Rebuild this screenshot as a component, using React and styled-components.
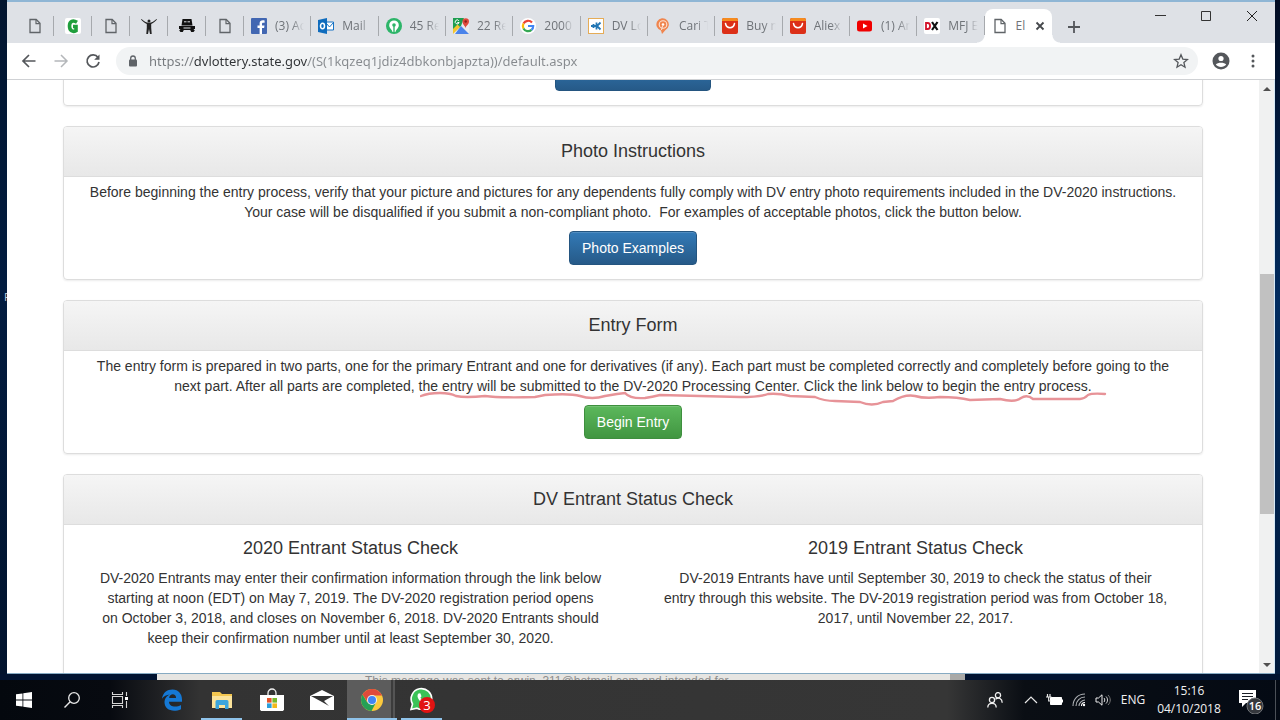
import React from "react";
import styled, { createGlobalStyle, css } from "styled-components";

const ui = `"Open Sans", "Noto Sans", sans-serif`;
const web = `"Liberation Sans", Arial, sans-serif`;

const GlobalStyle = createGlobalStyle`
  *, *::before, *::after { box-sizing: border-box; }
  body { margin: 0; background: #02142f; }
  button, input { font: inherit; margin: 0; }
  h2, h3, p { margin: 0; font-weight: 400; }
  svg { display: block; }
`;

/* ---------- Desktop ---------- */
const Desktop = styled.div`
  display: flex;
  flex-direction: column;
  height: 100vh;
  overflow: hidden;
  background: linear-gradient(180deg, #02152f, #021c40 40%, #01122b);
`;
const Stage = styled.div`
  flex: 1;
  min-height: 0;
  display: flex;
`;
const LeftEdge = styled.div`
  flex: none;
  width: 7px;
  display: flex;
  align-items: center;
  padding: 0 0 80px 4px;
  overflow: hidden;
  color: #c9d3df;
  font: 11px/16px ${ui};
`;
const RightEdge = styled.div`
  flex: none;
  width: 5px;
  background: linear-gradient(180deg, #020c22, #012c60 45%, #011a3c);
`;
const Behind = styled.div`
  flex: none;
  height: 6px;
  display: flex;
  overflow: hidden;
`;
const BehindGap = styled.div`
  flex: none;
  width: ${(p) => p.$w}px;
  background: #011330;
`;
const BehindMail = styled.div`
  flex: 1;
  background: #e6e5e2;
  border-right: 15px solid #a9a9a7;
  padding-left: 208px;
  color: #8d8d8d;
  font: 12px/14px ${web};
  white-space: nowrap;
`;

/* ---------- Browser window ---------- */
const Window = styled.main`
  flex: 1;
  min-width: 0;
  display: flex;
  flex-direction: column;
  background: #fff;
  border-bottom: 1px solid #86aac2;
`;
const TabStrip = styled.header`
  flex: none;
  height: 43px;
  display: flex;
  background: #dee1e6;
  border-top: 2px solid #8fb6d5;
`;
const Tabs = styled.nav`
  flex: 1;
  min-width: 0;
  display: flex;
  align-items: flex-end;
  padding-left: 9px;
`;
const Tab = styled.button`
  flex: ${(p) => (p.$pinned ? "0 0 38px" : "1 1 0")};
  min-width: 0;
  height: 34px;
  display: flex;
  align-items: center;
  justify-content: ${(p) => (p.$pinned ? "center" : "flex-start")};
  gap: 8px;
  padding: ${(p) => (p.$pinned ? "0" : "0 7px")};
  border: 0;
  background: linear-gradient(#a6a9ad, #a6a9ad) right center / 1px 20px no-repeat;
  color: #6f7378;
  font: 12px/16px ${ui};
  ${(p) =>
    p.$active &&
    css`
      position: relative;
      background: #fff;
      border-radius: 8px 8px 0 0;
      &::before,
      &::after {
        content: "";
        position: absolute;
        bottom: 0;
        width: 8px;
        height: 8px;
      }
      &::before {
        right: 100%;
        background: radial-gradient(circle at 0 0, #dee1e6 7px, #fff 8px);
      }
      &::after {
        left: 100%;
        background: radial-gradient(circle at 100% 0, #dee1e6 7px, #fff 8px);
      }
    `}
`;
const Favicon = styled.span`
  flex: none;
`;
const TabTitle = styled.span`
  flex: 1;
  min-width: 0;
  overflow: hidden;
  text-align: left;
  white-space: nowrap;
  mask-image: linear-gradient(90deg, #000 calc(100% - 12px), transparent);
`;
const ActiveTitle = styled(TabTitle)`
  mask-image: none;
`;
const NewTab = styled.button`
  flex: none;
  width: 85px;
  padding: 8px 0 0 15px;
  border: 0;
  background: none;
`;
const WindowButton = styled.button`
  flex: none;
  width: 46px;
  height: 28px;
  display: grid;
  place-items: center;
  padding: 0;
  border: 0;
  background: none;
`;
const Toolbar = styled.div`
  flex: none;
  height: 37px;
  display: flex;
  align-items: center;
  padding: 0 6px;
  border-bottom: 1px solid #cfd1d4;
`;
const ToolButton = styled.button`
  flex: none;
  width: 32px;
  height: 28px;
  display: grid;
  place-items: center;
  padding: 0;
  border: 0;
  background: none;
`;
const Omnibox = styled.label`
  flex: 1;
  min-width: 0;
  height: 28px;
  display: flex;
  align-items: center;
  gap: 11px;
  margin: 0 7px;
  padding: 0 1px 0 12px;
  border-radius: 14px;
  background: #f1f3f4;
`;
const Address = styled.input`
  flex: 1;
  min-width: 0;
  padding: 0;
  border: 0;
  outline: 0;
  font: 13px/20px "Noto Sans", ${ui};
  color: transparent;
  background: linear-gradient(90deg, #75797d 45px, #303336 45px, #303336 159px, #868a8e 159px);
  background-clip: text;
`;

/* ---------- Web page ---------- */
const Viewport = styled.div`
  flex: 1;
  min-height: 0;
  display: flex;
`;
const Page = styled.div`
  flex: 1;
  min-width: 0;
  overflow: hidden;
  display: flex;
  flex-direction: column;
  gap: 20px;
  padding: 0 56px;
  color: #333;
  font: 14px/20px ${web};
`;
const Panel = styled.section`
  flex: none;
  border: 1px solid #ddd;
  border-radius: 4px;
  box-shadow: 0 1px 2px rgba(0, 0, 0, 0.08);
  text-align: center;
`;
const ClippedPanel = styled(Panel)`
  margin-top: -29px;
`;
const PanelTitle = styled.h2`
  height: 50px;
  border-bottom: 1px solid #ddd;
  border-radius: 3px 3px 0 0;
  background: linear-gradient(#f5f5f5, #e8e8e8);
  font-size: 18px;
  line-height: 48px;
`;
const PanelBody = styled.div`
  display: flex;
  flex-direction: column;
  align-items: center;
  gap: 9px;
  padding: 5px 14px 14px;
`;
const Copy = styled.p`
  position: relative;
  align-self: stretch;
`;
const Action = styled.button`
  height: 34px;
  min-width: ${(p) => p.$minWidth || 0}px;
  padding: 0 12px;
  border: 1px solid ${(p) => (p.$green ? "#3e8f3e" : "#245580")};
  border-radius: 4px;
  background: ${(p) =>
    p.$green ? "linear-gradient(#5cb85c, #419641)" : "linear-gradient(#337ab7, #265a88)"};
  box-shadow: inset 0 1px 0 rgba(255, 255, 255, 0.15);
  color: #fff;
`;
const Columns = styled.div`
  display: grid;
  grid-template-columns: 1fr 1fr;
  padding: 13px 4px 60px;
`;
const ColumnTitle = styled.h3`
  margin-bottom: 10px;
  font-size: 18px;
  line-height: 20px;
`;
const Marker = styled.svg`
  position: absolute;
  top: 34px;
  left: 50%;
  margin-left: -213px;
`;
const Scrollbar = styled.div`
  flex: none;
  width: 16px;
  display: flex;
  flex-direction: column;
  background: #f0f1f1;
  border-right: 1px solid #d5e9f7;
`;
const ScrollArrow = styled.button`
  flex: none;
  height: 17px;
  display: grid;
  place-items: center;
  padding: 0;
  border: 0;
  background: none;
`;
const ScrollSpace = styled.div`
  flex: ${(p) => p.$share};
`;
const ScrollThumb = styled.div`
  flex: 240;
  margin-left: 1px;
  background: #c1c1c1;
`;

/* ---------- Taskbar ---------- */
const Taskbar = styled.footer`
  flex: none;
  height: 40px;
  display: flex;
  background: linear-gradient(90deg, #04080e 0, #070a10 110px, #333 200px, #363636 74%, #0a0e14 80%, #040a14);
  color: #f2f2f2;
  font: 12px/18px ${ui};
`;
const TaskButton = styled.button`
  flex: none;
  width: ${(p) => (p.$app ? 50 : 48)}px;
  display: grid;
  place-items: center;
  padding: 0;
  border: 0;
  background: ${(p) =>
    p.$active ? "linear-gradient(90deg, #5c5c5c 44px, #3c3c3c 44px, #3c3c3c 46px, #555 46px)" : "none"};
  background-size: 48px 100%;
  background-repeat: no-repeat;
  ${(p) => p.$open && css`box-shadow: inset 0 -2px 0 #8fc3ea;`}
  ${(p) =>
    p.$line &&
    css`
      background: linear-gradient(#8fc3ea, #8fc3ea) 4px 100% / 41px 2px no-repeat;
    `}
`;
const Apps = styled.nav`
  flex: 1;
  min-width: 0;
  display: flex;
  padding-left: 3px;
`;
const Tray = styled.div`
  flex: none;
  display: flex;
  align-items: center;
`;
const TrayButton = styled.button`
  flex: none;
  width: ${(p) => p.$w || 24}px;
  height: 40px;
  display: grid;
  place-items: center;
  padding: 0;
  border: 0;
  background: none;
  color: inherit;
  white-space: nowrap;
`;
const Peek = styled.div`
  flex: none;
  width: 5px;
  height: 40px;
  border-left: 1px solid #4b5057;
`;

/* ---------- Favicons ---------- */
const Svg = ({ w = 16, h = w, box, children, ...rest }) => (
  <svg width={w} height={h} viewBox={box || `0 0 ${w} ${h}`} fill="none" aria-hidden="true" {...rest}>
    {children}
  </svg>
);
const DocIcon = () => (
  <Svg>
    <path d="M3 1.500h6.200L13 5.300v9.200H3z" stroke="#606468" strokeWidth="1.300" />
    <path d="M9 1.800v3.900h3.800" stroke="#606468" strokeWidth="1.200" />
  </Svg>
);
const GreenG = () => (
  <Svg>
    <rect width="16" height="16" rx="2" fill="#fff" />
    <path d="M12 4.300C8 1.800 4.500 3 4.500 8s3.500 6.300 6.500 4.600V8.500H8" stroke="#1f9e3c" strokeWidth="3.600" />
  </Svg>
);
const PersonArms = () => (
  <Svg>
    <circle cx="8" cy="3" r="1.500" fill="#222" />
    <path d="M.5 1C3 3.300 5 4.600 8 4.800c3-.2 5-1.500 7.500-3.800l.5.600c-2 2.400-4 3.700-5.800 4.500v3.600l.5 6.300H9L8 11l-1 5H5.300l.5-6.300V6.100C4 5.300 2 4 0 1.600z" fill="#222" />
  </Svg>
);
const JeepIcon = () => (
  <Svg>
    <path d="M3.500 1h9l1 6.500h-11z" fill="#111" />
    <path d="M5 3.800h2.500M8.500 3.800H11" stroke="#dee1e6" />
    <path d="M0 8h16v3h-1.500l1.300 1.500-1.300 1.500h-2.300l-1-2H4.800l-1 2H1.500L.2 12.500 1.500 11H0z" fill="#111" />
    <path d="M4.500 10h7" stroke="#dee1e6" />
  </Svg>
);
const FacebookIcon = () => (
  <Svg>
    <rect width="16" height="16" rx="1" fill="#4267b2" />
    <path d="M11 16V10h2.100l.4-2.500H11V6c0-.8.4-1.300 1.400-1.300h1.200V2.500c-3.200-.6-5 .4-5 3.100v1.900H6.500V10h2.100v6z" fill="#fff" />
  </Svg>
);
const OutlookIcon = () => (
  <Svg>
    <path d="M8 4h7.500v8H8z" fill="#fff" stroke="#1673c4" />
    <path d="m8 5 3.500 4L15.500 4.500" stroke="#1673c4" />
    <path d="M0 2l9-2v16l-9-2z" fill="#0f6cbd" />
    <ellipse cx="4.500" cy="8" rx="2" ry="2.700" stroke="#fff" strokeWidth="1.500" />
  </Svg>
);
const GreenPin = () => (
  <Svg>
    <circle cx="8" cy="8" r="8" fill="#2db569" />
    <path d="M6.500 14C6.500 11.500 3.200 10.500 3.200 7.200a4.800 4.800 0 0 1 9.600 0c0 3.300-3.300 4.300-3.300 6.800z" fill="#fff" />
    <circle cx="8" cy="7" r="1.800" fill="#2db569" />
    <path d="M8 8v7" stroke="#2db569" strokeWidth="1.400" />
  </Svg>
);
const MapsIcon = () => (
  <Svg>
    <rect width="16" height="16" rx="1" fill="#e8eaed" />
    <path d="M0 0h11L8 8l-8 7z" fill="#1e9e50" />
    <path d="m0 11 4.500-4.500L7 9l-7 7z" fill="#f5c52c" />
    <path d="m8 8 8 8H2z" fill="#4a83ea" />
    <path d="M12.500 10C12 7.500 9.500 6.500 9.500 3.500a3.200 3.200 0 0 1 6.500 0c0 3-3 4-3.500 6.500z" fill="#df4a3c" />
    <circle cx="12.700" cy="3.500" r="1.200" fill="#8b1f19" />
    <path d="M5.800 2.700a2 2 0 1 0 .3 1.800H4.300" stroke="#fff" />
  </Svg>
);
const GoogleIcon = () => (
  <Svg>
    <circle cx="8" cy="8" r="8" fill="#fff" />
    <path d="M12 4.500A5.200 5.200 0 0 0 3.500 5.600" stroke="#ea4335" strokeWidth="2.200" />
    <path d="M3.500 5.600a5.200 5.200 0 0 0 0 4.800" stroke="#fbbc05" strokeWidth="2.200" />
    <path d="M3.500 10.400a5.200 5.200 0 0 0 8 1.500" stroke="#34a853" strokeWidth="2.200" />
    <path d="M11.500 11.900A5 5 0 0 0 13.200 8H8" stroke="#4285f4" strokeWidth="2.200" />
  </Svg>
);
const KIcon = () => (
  <Svg>
    <rect x=".5" y=".5" width="15" height="15" fill="#fff" stroke="#e5ac57" />
    <path d="M3 8h5M5.500 6v4M8.500 4.500v7M12.500 4.500 9 8l3.500 3.500" stroke="#2377b4" strokeWidth="1.800" />
  </Svg>
);
const OrangePin = () => (
  <Svg>
    <path d="M7 16 6 12.500A6.200 6.200 0 1 1 10.500 12z" fill="#f0854e" />
    <circle cx="8" cy="6.500" r="3.800" stroke="#fbe3d6" strokeWidth="1.100" />
    <circle cx="8" cy="6.500" r="1.300" fill="#fff" />
    <path d="m7.500 8-1 4" stroke="#fbe3d6" />
  </Svg>
);
const AliIcon = () => (
  <Svg>
    <rect width="16" height="16" rx="2" fill="#dc3018" />
    <path d="M0 3V2a2 2 0 0 1 2-2h12a2 2 0 0 1 2 2v1z" fill="#f58b1f" />
    <path d="M3.500 5.500c1 5.500 8 5.500 9 0" stroke="#fff" strokeWidth="1.500" strokeLinecap="round" />
  </Svg>
);
const YoutubeIcon = () => (
  <Svg>
    <rect x="0" y="2.500" width="15" height="11" rx="2.500" fill="#f00000" />
    <path d="m6 5.500 4.500 2.500L6 10.500z" fill="#fff" />
  </Svg>
);
const DxIcon = () => (
  <Svg>
    <rect width="16" height="16" rx="2" fill="#fff" />
    <path d="M2 5h1.800c3 0 3 6 0 6H2z" stroke="#d3142c" strokeWidth="1.800" />
    <path d="m8 4 5.500 8M13.500 4 8 12" stroke="#111" strokeWidth="2.200" />
  </Svg>
);

/* ---------- Data ---------- */
const pinnedTabs = [DocIcon, GreenG, DocIcon, PersonArms, JeepIcon, DocIcon];
const openTabs = [
  [FacebookIcon, "(3) Ads"],
  [OutlookIcon, "Mail"],
  [GreenPin, "45 Re"],
  [MapsIcon, "22 Re"],
  [GoogleIcon, "2000"],
  [KIcon, "DV Lo"],
  [OrangePin, "Cari T"],
  [AliIcon, "Buy n"],
  [AliIcon, "Aliex"],
  [YoutubeIcon, "(1) An"],
  [DxIcon, "MFJ E"],
];

const InfoPanel = ({ title, children }) => (
  <Panel>
    <PanelTitle>{title}</PanelTitle>
    {children}
  </Panel>
);

const Browser = () => (
  <Window>
    <TabStrip>
      <Tabs aria-label="Tabs">
        {pinnedTabs.map((Icon, i) => (
          <Tab key={i} $pinned aria-label="Pinned tab">
            <Icon />
          </Tab>
        ))}
        {openTabs.map(([Icon, title]) => (
          <Tab key={title}>
            <Favicon><Icon /></Favicon>
            <TabTitle>{title}</TabTitle>
          </Tab>
        ))}
        <Tab $active>
          <Favicon><DocIcon /></Favicon>
          <ActiveTitle>El</ActiveTitle>
          <Svg w={10}><path d="m1.500 1.500 7 7m0-7-7 7" stroke="#45484c" strokeWidth="1.800" /></Svg>
        </Tab>
      </Tabs>
      <NewTab aria-label="New tab">
        <Svg w={14}><path d="M7 1v12M1 7h12" stroke="#54575b" strokeWidth="1.800" /></Svg>
      </NewTab>
      <WindowButton aria-label="Minimize">
        <Svg w={12}><path d="M1 5.500h11" stroke="#333" /></Svg>
      </WindowButton>
      <WindowButton aria-label="Maximize">
        <Svg w={12}><path d="M1.500 1.500h9v9h-9z" stroke="#333" /></Svg>
      </WindowButton>
      <WindowButton aria-label="Close">
        <Svg w={12}><path d="m1 1 10 10m0-10L1 11" stroke="#222" /></Svg>
      </WindowButton>
    </TabStrip>
    <Toolbar>
      <ToolButton aria-label="Back">
        <Svg w={16}><path d="M14.500 8H2.500M8 2 2 8l6 6" stroke="#54575b" strokeWidth="1.700" /></Svg>
      </ToolButton>
      <ToolButton aria-label="Forward">
        <Svg w={16}><path d="M1.500 8h12M8 2l6 6-6 6" stroke="#b4b7ba" strokeWidth="1.500" /></Svg>
      </ToolButton>
      <ToolButton aria-label="Reload">
        <Svg w={16}>
          <path d="M13 4.500A6 6 0 1 0 14 9" stroke="#54575b" strokeWidth="1.700" />
          <path d="M14.500 1.500v5.300H9.200z" fill="#54575b" />
        </Svg>
      </ToolButton>
      <Omnibox>
        <Svg w={10} h={12}>
          <rect x="1" y="4.500" width="8" height="7" rx="1" fill="#5f6368" />
          <path d="M2.700 5V3.300a2.300 2.300 0 0 1 4.600 0V5" stroke="#5f6368" strokeWidth="1.300" />
        </Svg>
        <Address
          aria-label="Address"
          spellCheck={false}
          defaultValue="https://dvlottery.state.gov/(S(1kqzeq1jdiz4dbkonbjapzta))/default.aspx"
        />
        <ToolButton aria-label="Bookmark">
          <Svg w={16}>
            <path d="m8 1.800 1.800 4.300 4.700.4-3.600 3.100 1.100 4.600L8 11.700l-4 2.500 1.100-4.600-3.600-3.100 4.700-.4z" stroke="#54575b" strokeWidth="1.300" />
          </Svg>
        </ToolButton>
      </Omnibox>
      <ToolButton aria-label="Profile">
        <Svg w={18}>
          <circle cx="9" cy="9" r="8.500" fill="#54575b" />
          <circle cx="9" cy="6.500" r="2.600" fill="#fff" />
          <path d="M3.800 12.600c1.800-2.600 8.600-2.600 10.400 0-2.300 3.200-8.100 3.200-10.400 0z" fill="#fff" />
        </Svg>
      </ToolButton>
      <ToolButton aria-label="Menu">
        <Svg w={4} h={14}>
          <circle cx="2" cy="2" r="1.500" fill="#54575b" />
          <circle cx="2" cy="7" r="1.500" fill="#54575b" />
          <circle cx="2" cy="12" r="1.500" fill="#54575b" />
        </Svg>
      </ToolButton>
    </Toolbar>
    <Viewport>
      <Page>
        <ClippedPanel>
          <PanelBody>
            <Action $minWidth={156} aria-label="Instructions" />
          </PanelBody>
        </ClippedPanel>
        <InfoPanel title="Photo Instructions">
          <PanelBody>
            <Copy>
              Before beginning the entry process, verify that your picture and pictures for any dependents fully comply with DV entry photo requirements included in the DV-2020 instructions.
              <br />
              Your case will be disqualified if you submit a non-compliant photo.&nbsp; For examples of acceptable photos, click the button below.
            </Copy>
            <Action>Photo Examples</Action>
          </PanelBody>
        </InfoPanel>
        <InfoPanel title="Entry Form">
          <PanelBody>
            <Copy>
              The entry form is prepared in two parts, one for the primary Entrant and one for derivatives (if any). Each part must be completed correctly and completely before going to the
              <br />
              next part. After all parts are completed, the entry will be submitted to the DV-2020 Processing Center. Click the link below to begin the entry process.
              <Marker width="688" height="18" viewBox="420 390 688 18" fill="none" aria-hidden="true">
                <path
                  d="M421 396Q428 393 440 393 450 393 456 396 465 398 485 396 500 398 535 397L545 395Q570 393 580 396 592 400 605 396L617 394 625 393Q630 399 645 398 652 397 660 395L740 397Q760 397 768 394 778 393 790 396L815 397Q824 401 835 401L860 402Q872 407 883 402L893 401Q905 394 915 396 925 399 940 397 958 397 970 400L1000 399Q1015 403 1021 398 1027 394 1033 399L1080 399Q1084 399 1088 395 1092 393 1105 394"
                  stroke="#e79398"
                  strokeWidth="2.400"
                  strokeLinecap="round"
                />
              </Marker>
            </Copy>
            <Action $green>Begin Entry</Action>
          </PanelBody>
        </InfoPanel>
        <InfoPanel title="DV Entrant Status Check">
          <Columns>
            <div>
              <ColumnTitle>2020 Entrant Status Check</ColumnTitle>
              <p>
                DV-2020 Entrants may enter their confirmation information through the link below
                <br />
                starting at noon (EDT) on May 7, 2019. The DV-2020 registration period opens
                <br />
                on October 3, 2018, and closes on November 6, 2018. DV-2020 Entrants should
                <br />
                keep their confirmation number until at least September 30, 2020.
              </p>
            </div>
            <div>
              <ColumnTitle>2019 Entrant Status Check</ColumnTitle>
              <p>
                DV-2019 Entrants have until September 30, 2019 to check the status of their
                <br />
                entry through this website. The DV-2019 registration period was from October 18,
                <br />
                2017, until November 22, 2017.
              </p>
            </div>
          </Columns>
        </InfoPanel>
      </Page>
      <Scrollbar>
        <ScrollArrow aria-label="Scroll up">
          <Svg w={8} h={4}><path d="m0 4 4-4 4 4z" fill="#505050" /></Svg>
        </ScrollArrow>
        <ScrollSpace $share={177} />
        <ScrollThumb />
        <ScrollSpace $share={142} />
        <ScrollArrow aria-label="Scroll down">
          <Svg w={8} h={4}><path d="m0 0 4 4 4-4z" fill="#505050" /></Svg>
        </ScrollArrow>
      </Scrollbar>
    </Viewport>
  </Window>
);

const SystemBar = () => (
  <Taskbar>
    <TaskButton aria-label="Start">
      <Svg w={16}><path d="M0 2.300 6.500 1.400v6.200H0zM7.300 1.300 16 0v7.600H7.300zM0 8.400h6.500v6.200L0 13.700zM7.300 8.400H16V16l-8.700-1.300z" fill="#fff" /></Svg>
    </TaskButton>
    <TaskButton aria-label="Search">
      <Svg w={16}>
        <circle cx="10" cy="6" r="5.300" stroke="#e8e8e8" strokeWidth="1.300" />
        <path d="m6.200 9.800-5.700 5.700" stroke="#e8e8e8" strokeWidth="1.400" />
      </Svg>
    </TaskButton>
    <TaskButton aria-label="Task view">
      <Svg w={18} h={16}>
        <path d="M1.500 4.500h10v7h-10zM1.500 0v2.500h10V0M1.500 16v-2.500h10V16M15.500 0v4M15.500 9v7" stroke="#d5d5d5" strokeWidth="1.100" />
        <path d="M14 5h3v3h-3z" fill="#fff" />
      </Svg>
    </TaskButton>
    <Apps aria-label="Apps">
      <TaskButton $app aria-label="Edge">
        <Svg w={22} h={22}>
          <path d="M1 9.800C2 3.500 6 .5 11.500.5 17.500.5 21 5 21 10.500v2.200H8c.3 5.500 7.500 5.800 12 3.200v4.300C11.500 24 3.500 20.500 3.500 13.300c0-3.800 2.300-6.500 5.500-7.800C5.500 5.700 2.700 7.300 1 9.800zM8.200 9h6.900C15 3.700 8.400 4.500 8.200 9z" fill="#1578d4" />
        </Svg>
      </TaskButton>
      <TaskButton $app $line aria-label="File Explorer">
        <Svg w={22} h={18}>
          <path d="M1 1h8l2 2h10v14H1z" fill="#f3c64f" />
          <path d="M1 5h20v12H1z" fill="#fbe39b" />
          <path d="M4.500 18v-7.500a1.500 1.500 0 0 1 1.500-1.500h10a1.500 1.500 0 0 1 1.500 1.500V18H14v-4H8v4z" fill="#3ba5dc" />
        </Svg>
      </TaskButton>
      <TaskButton $app aria-label="Store">
        <Svg w={24} h={24}>
          <path d="M8 7V5a4 4 0 0 1 8 0v2" stroke="#f0f0f0" strokeWidth="1.300" />
          <path d="M0 7h24v14.500l-1 1.500H1l-1-1.500z" fill="#fff" />
          <path d="M7 10h4.600v4.600H7z" fill="#e5532a" />
          <path d="M12.400 10H17v4.600h-4.600z" fill="#75b82b" />
          <path d="M7 15.400h4.600V20H7z" fill="#2a9fdc" />
          <path d="M12.400 15.400H17V20h-4.600z" fill="#f3b81c" />
        </Svg>
      </TaskButton>
      <TaskButton $app aria-label="Mail">
        <Svg w={24} h={20}>
          <path d="M0 6 12 0l12 6v14H0z" fill="#fff" />
          <path d="m1 6 22 0-9 5 5 5-7-4z" fill="#333" />
        </Svg>
      </TaskButton>
      <TaskButton $app $active $open aria-label="Chrome">
        <Svg w={22} h={22}>
          <circle cx="11" cy="11" r="11" fill="#fbc93d" />
          <path d="M1.500 5.500A11 11 0 0 1 20.500 5.500L21 6.500H11L6.500 13z" fill="#e04a3b" />
          <path d="M1.500 5.500A11 11 0 0 0 10.500 22l4.500-8.500-4 2.500-5-3z" fill="#25a056" />
          <circle cx="11" cy="11" r="5" fill="#f2f2f2" />
          <circle cx="11" cy="11" r="4" fill="#4285f4" />
        </Svg>
      </TaskButton>
      <TaskButton $app $line aria-label="WhatsApp">
        <Svg w={26} h={26} box="-1 0 26 26">
          <path d="M1 22.500 2.500 17A10.300 10.300 0 1 1 7 21.200z" fill="#3bc257" stroke="#fff" strokeWidth="1.600" />
          <path d="M8.500 6.500c-3.500 3.500 3 11 8 9.800l1.500-2-3-2-1.500 1.200c-1.500-.6-2.500-1.700-3-3l1-1.200-1.200-3z" fill="#fff" />
          <circle cx="17" cy="18" r="8" fill="#e11313" />
          <text x="17" y="22.500" textAnchor="middle" fontSize="13" fontFamily="Open Sans, sans-serif" fill="#fff">3</text>
        </Svg>
      </TaskButton>
    </Apps>
    <Tray>
      <TrayButton $w={48} aria-label="People">
        <Svg w={16} h={16}>
          <circle cx="5" cy="8" r="2.600" stroke="#f0f0f0" strokeWidth="1.300" />
          <path d="M.8 15.500c0-5.500 8.400-5.500 8.400 0" stroke="#f0f0f0" strokeWidth="1.300" />
          <circle cx="11" cy="3.200" r="2.600" stroke="#f0f0f0" strokeWidth="1.300" />
          <path d="M8.500 7.200c3-2.500 6.700-.5 6.700 3.500" stroke="#f0f0f0" strokeWidth="1.300" />
        </Svg>
      </TrayButton>
      <TrayButton aria-label="Show hidden icons">
        <Svg w={14} h={8}><path d="m1 7 6-6 6 6" stroke="#e8e8e8" strokeWidth="1.200" /></Svg>
      </TrayButton>
      <TrayButton aria-label="Battery">
        <Svg w={18} h={12}>
          <path d="M4.500 3.500h11v7h-11z" fill="#fff" stroke="#fff" />
          <path d="M16.500 5.500v3" stroke="#fff" />
          <path d="M1.500 0v2.500M4 0v2.500M0 3h5.500M2.700 3v4H5" stroke="#e8e8e8" strokeWidth="1.200" />
        </Svg>
      </TrayButton>
      <TrayButton aria-label="Network">
        <Svg w={14} h={14}>
          <path d="M1 13C1 6 6 1 13 1M4 13c0-5 4-9 9-9M7 13c0-3 3-6 6-6" stroke="#aeb1b5" strokeWidth="1.100" />
          <path d="M9.500 13c0-2 1.500-3.500 3.500-3.500" stroke="#fff" strokeWidth="1.100" />
          <circle cx="12" cy="12" r="1.200" fill="#fff" />
        </Svg>
      </TrayButton>
      <TrayButton aria-label="Volume">
        <Svg w={16} h={12}>
          <path d="M1 4h2.500L7 .8v10.400L3.500 8H1z" stroke="#eee" />
          <path d="M9 4c1 1.200 1 2.800 0 4M11 2.500c2 2 2 5 0 7" stroke="#ddd" />
          <path d="M13 1c3 3 3 7 0 10" stroke="#777" />
        </Svg>
      </TrayButton>
      <TrayButton $w={36}>ENG</TrayButton>
      <TrayButton $w={76}>
        <span>
          15:16
          <br />
          04/10/2018
        </span>
      </TrayButton>
      <TrayButton $w={48} aria-label="Notifications">
        <Svg w={28} h={28}>
          <path d="M2 4h17v13H9l-4 4v-4H2z" fill="#fff" />
          <path d="M5 7.500h11M5 10.500h11M5 13.500h6" stroke="#1a1e26" />
          <circle cx="18" cy="20" r="8" fill="#35383d" stroke="#6f7276" />
          <text x="18" y="24" textAnchor="middle" fontSize="11" fontWeight="600" fontFamily="Open Sans, sans-serif" fill="#fff">16</text>
        </Svg>
      </TrayButton>
      <Peek />
    </Tray>
  </Taskbar>
);

export default function App() {
  return (
    <>
      <GlobalStyle />
      <Desktop>
        <Stage>
          <LeftEdge>F</LeftEdge>
          <Browser />
          <RightEdge />
        </Stage>
        <Behind>
          <BehindGap $w={157} />
          <BehindMail>This message was sent to erwin_311@hotmail.com and intended for</BehindMail>
          <BehindGap $w={315} />
        </Behind>
        <SystemBar />
      </Desktop>
    </>
  );
}
